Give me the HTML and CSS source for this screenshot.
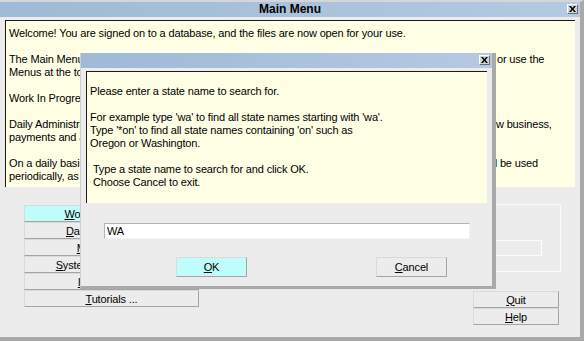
FILE: index.html
```html
<!DOCTYPE html>
<html>
<head>
  <meta name="viewport" content="width=device-width, initial-scale=1">
  <title>Main Menu</title>
  <link rel="stylesheet" href="styles.css">
</head>
<body>
  <div class="main-window">
    <div class="title-bar">
      <span class="title-text">Main Menu</span>
      <button type="button" class="close-button">
        <svg width="7" height="6" viewBox="0 0 7 6"><path d="M0 0h2l1.5 2 1.5-2h2L4.5 3 7 6H5L3.5 4 2 6H0l2.5-3z" fill="#000"/></svg>
      </button>
    </div>
    <div class="info-panel">
      <p>Welcome! You are signed on to a database, and the files are now open for your use.</p>
      <p>The Main Menu gives you access to every part of the program. Click on one of the large buttons below, or use the<br>Menus at the top of the screen to move between the areas of the system.</p>
      <p>Work In Progress shows the jobs and orders that are currently open.</p>
      <p>Daily Administration is where all the day to day work is entered in each day, such as new customers, new business,<br>payments and adjustments.</p>
      <p>On a daily basis most of your time will be spent in here. The other options shown on this main menu will be used<br>periodically, as needed.</p>
    </div>
    <div class="lower-area">
      <div class="menu-buttons">
        <button type="button" class="menu-button is-active"><u>W</u>ork In Progress ...</button>
        <button type="button" class="menu-button"><u>D</u>aily Processing ...</button>
        <button type="button" class="menu-button"><u>M</u>aster Files ...</button>
        <button type="button" class="menu-button"><u>S</u>ystem Maintenance ...</button>
        <button type="button" class="menu-button"><u>I</u>mport Data ...</button>
        <button type="button" class="menu-button"><u>T</u>utorials ...</button>
      </div>
      <div class="side-column">
        <div class="group-box">
          <div class="group-field"></div>
        </div>
        <div class="side-buttons">
          <button type="button" class="menu-button"><u>Q</u>uit</button>
          <button type="button" class="menu-button"><u>H</u>elp</button>
        </div>
      </div>
    </div>
  </div>

  <!-- Search dialog sits over the main menu window -->
  <div class="dialog">
    <div class="title-bar dialog-title">
      <button type="button" class="close-button">
        <svg width="7" height="6" viewBox="0 0 7 6"><path d="M0 0h2l1.5 2 1.5-2h2L4.5 3 7 6H5L3.5 4 2 6H0l2.5-3z" fill="#000"/></svg>
      </button>
    </div>
    <div class="info-panel dialog-panel">
      <p>Please enter a state name to search for.</p>
      <p>For example type 'wa' to find all state names starting with 'wa'.<br>Type '*on' to find all state names containing 'on' such as<br>Oregon or Washington.</p>
      <p>&nbsp;Type a state name to search for and click OK.<br>&nbsp;Choose Cancel to exit.</p>
    </div>
    <input class="search-input" type="text" value="WA">
    <div class="dialog-buttons">
      <button type="button" class="dialog-button is-active"><u>O</u>K</button>
      <button type="button" class="dialog-button"><u>C</u>ancel</button>
    </div>
  </div>
</body>
</html>
```

FILE: styles.css
```css
html {
  height: 100%;
  width: 100%;
}

body {
  margin: 0;
  width: 584px;
  height: 341px;
  overflow: hidden;
  position: relative;
  font-family: "Liberation Sans", Arial, sans-serif;
  font-size: 11px;
  line-height: 13px;
  letter-spacing: -0.15px;
  color: #000;
  background-color: #ececec;
}

p {
  margin: 0 0 13px 0;
}

p:last-child {
  margin-bottom: 0;
}

.main-window {
  box-sizing: border-box;
  width: 584px;
  height: 341px;
  border-top: 2px solid #d6d6d6;
  border-right: 4px solid #a9a9a9;
  border-bottom: 4px solid #a9a9a9;
  background-color: #ececec;
}

.title-bar {
  position: relative;
  height: 15px;
  background: linear-gradient(to right, #9fbad6 0%, #a6bfd9 35%, #adc3dd 60%, #b4cae3 100%);
  text-align: center;
}

.title-text {
  font-weight: bold;
  font-size: 12px;
  line-height: 15px;
  letter-spacing: 0;
}

.close-button {
  position: absolute;
  right: 2px;
  top: 2px;
  box-sizing: border-box;
  width: 11px;
  height: 10px;
  margin: 0;
  padding: 0;
  display: flex;
  align-items: center;
  justify-content: center;
  border: 1px solid;
  border-color: #ffffff #6e6e6e #6e6e6e #ffffff;
  background-color: #d4d4d4;
}

.info-panel {
  box-sizing: border-box;
  width: 570px;
  height: 167px;
  margin: 3px 0 0 5px;
  padding: 6px 3px 0 3px;
  border-top: 1px solid #1a1a1a;
  border-left: 1px solid #1a1a1a;
  background-color: #ffffe6;
  white-space: nowrap;
  overflow: hidden;
}

.lower-area {
  display: flex;
  justify-content: space-between;
  padding: 17px 19px 0 24px;
}

.menu-buttons {
  display: flex;
  flex-direction: column;
  width: 175px;
  padding-top: 1px;
}

.menu-button {
  box-sizing: border-box;
  height: 17px;
  margin: 0;
  padding: 0;
  font-family: inherit;
  font-size: 11px;
  letter-spacing: inherit;
  color: #000;
  border: 1px solid;
  border-color: #dadada #a4a4a4 #a4a4a4 #dadada;
  background-color: #ececec;
}

.menu-button.is-active,
.dialog-button.is-active {
  background-color: #bffcfc;
}

.side-column {
  display: flex;
  flex-direction: column;
  align-items: flex-end;
  width: 345px;
}

.group-box {
  position: relative;
  box-sizing: border-box;
  width: 345px;
  height: 68px;
  border: 1px solid #fbfbfb;
}

.group-field {
  position: absolute;
  right: 18px;
  top: 35px;
  width: 120px;
  height: 16px;
  box-sizing: border-box;
  border: 1px solid #fbfbfb;
}

.side-buttons {
  display: flex;
  flex-direction: column;
  width: 86px;
  margin: 19px 2px 0 0;
}

.dialog {
  position: absolute;
  left: 80px;
  top: 53px;
  box-sizing: border-box;
  width: 416px;
  height: 236px;
  border-left: 1px solid #cfcfcf;
  border-right: 4px solid #a9a9a9;
  border-bottom: 3px solid #a9a9a9;
  background-color: #ececec;
}

.dialog-panel {
  width: 401px;
  height: 132px;
  padding-top: 13px;
}

.search-input {
  display: block;
  box-sizing: border-box;
  width: 366px;
  height: 16px;
  margin: 20px 0 0 23px;
  padding: 0 2px;
  font-family: inherit;
  font-size: 11px;
  letter-spacing: inherit;
  border: 1px solid;
  border-color: #b4b4b4 #f4f4f4 #f4f4f4 #b4b4b4;
  background-color: #fff;
  outline: none;
}

.dialog-buttons {
  display: flex;
  justify-content: space-between;
  width: 271px;
  margin: 18px 0 0 95px;
}

.dialog-button {
  box-sizing: border-box;
  width: 71px;
  height: 20px;
  margin: 0;
  padding: 0;
  font-family: inherit;
  font-size: 11px;
  letter-spacing: inherit;
  color: #000;
  border: 1px solid;
  border-color: #dadada #a4a4a4 #a4a4a4 #dadada;
  background-color: #ececec;
}
```
